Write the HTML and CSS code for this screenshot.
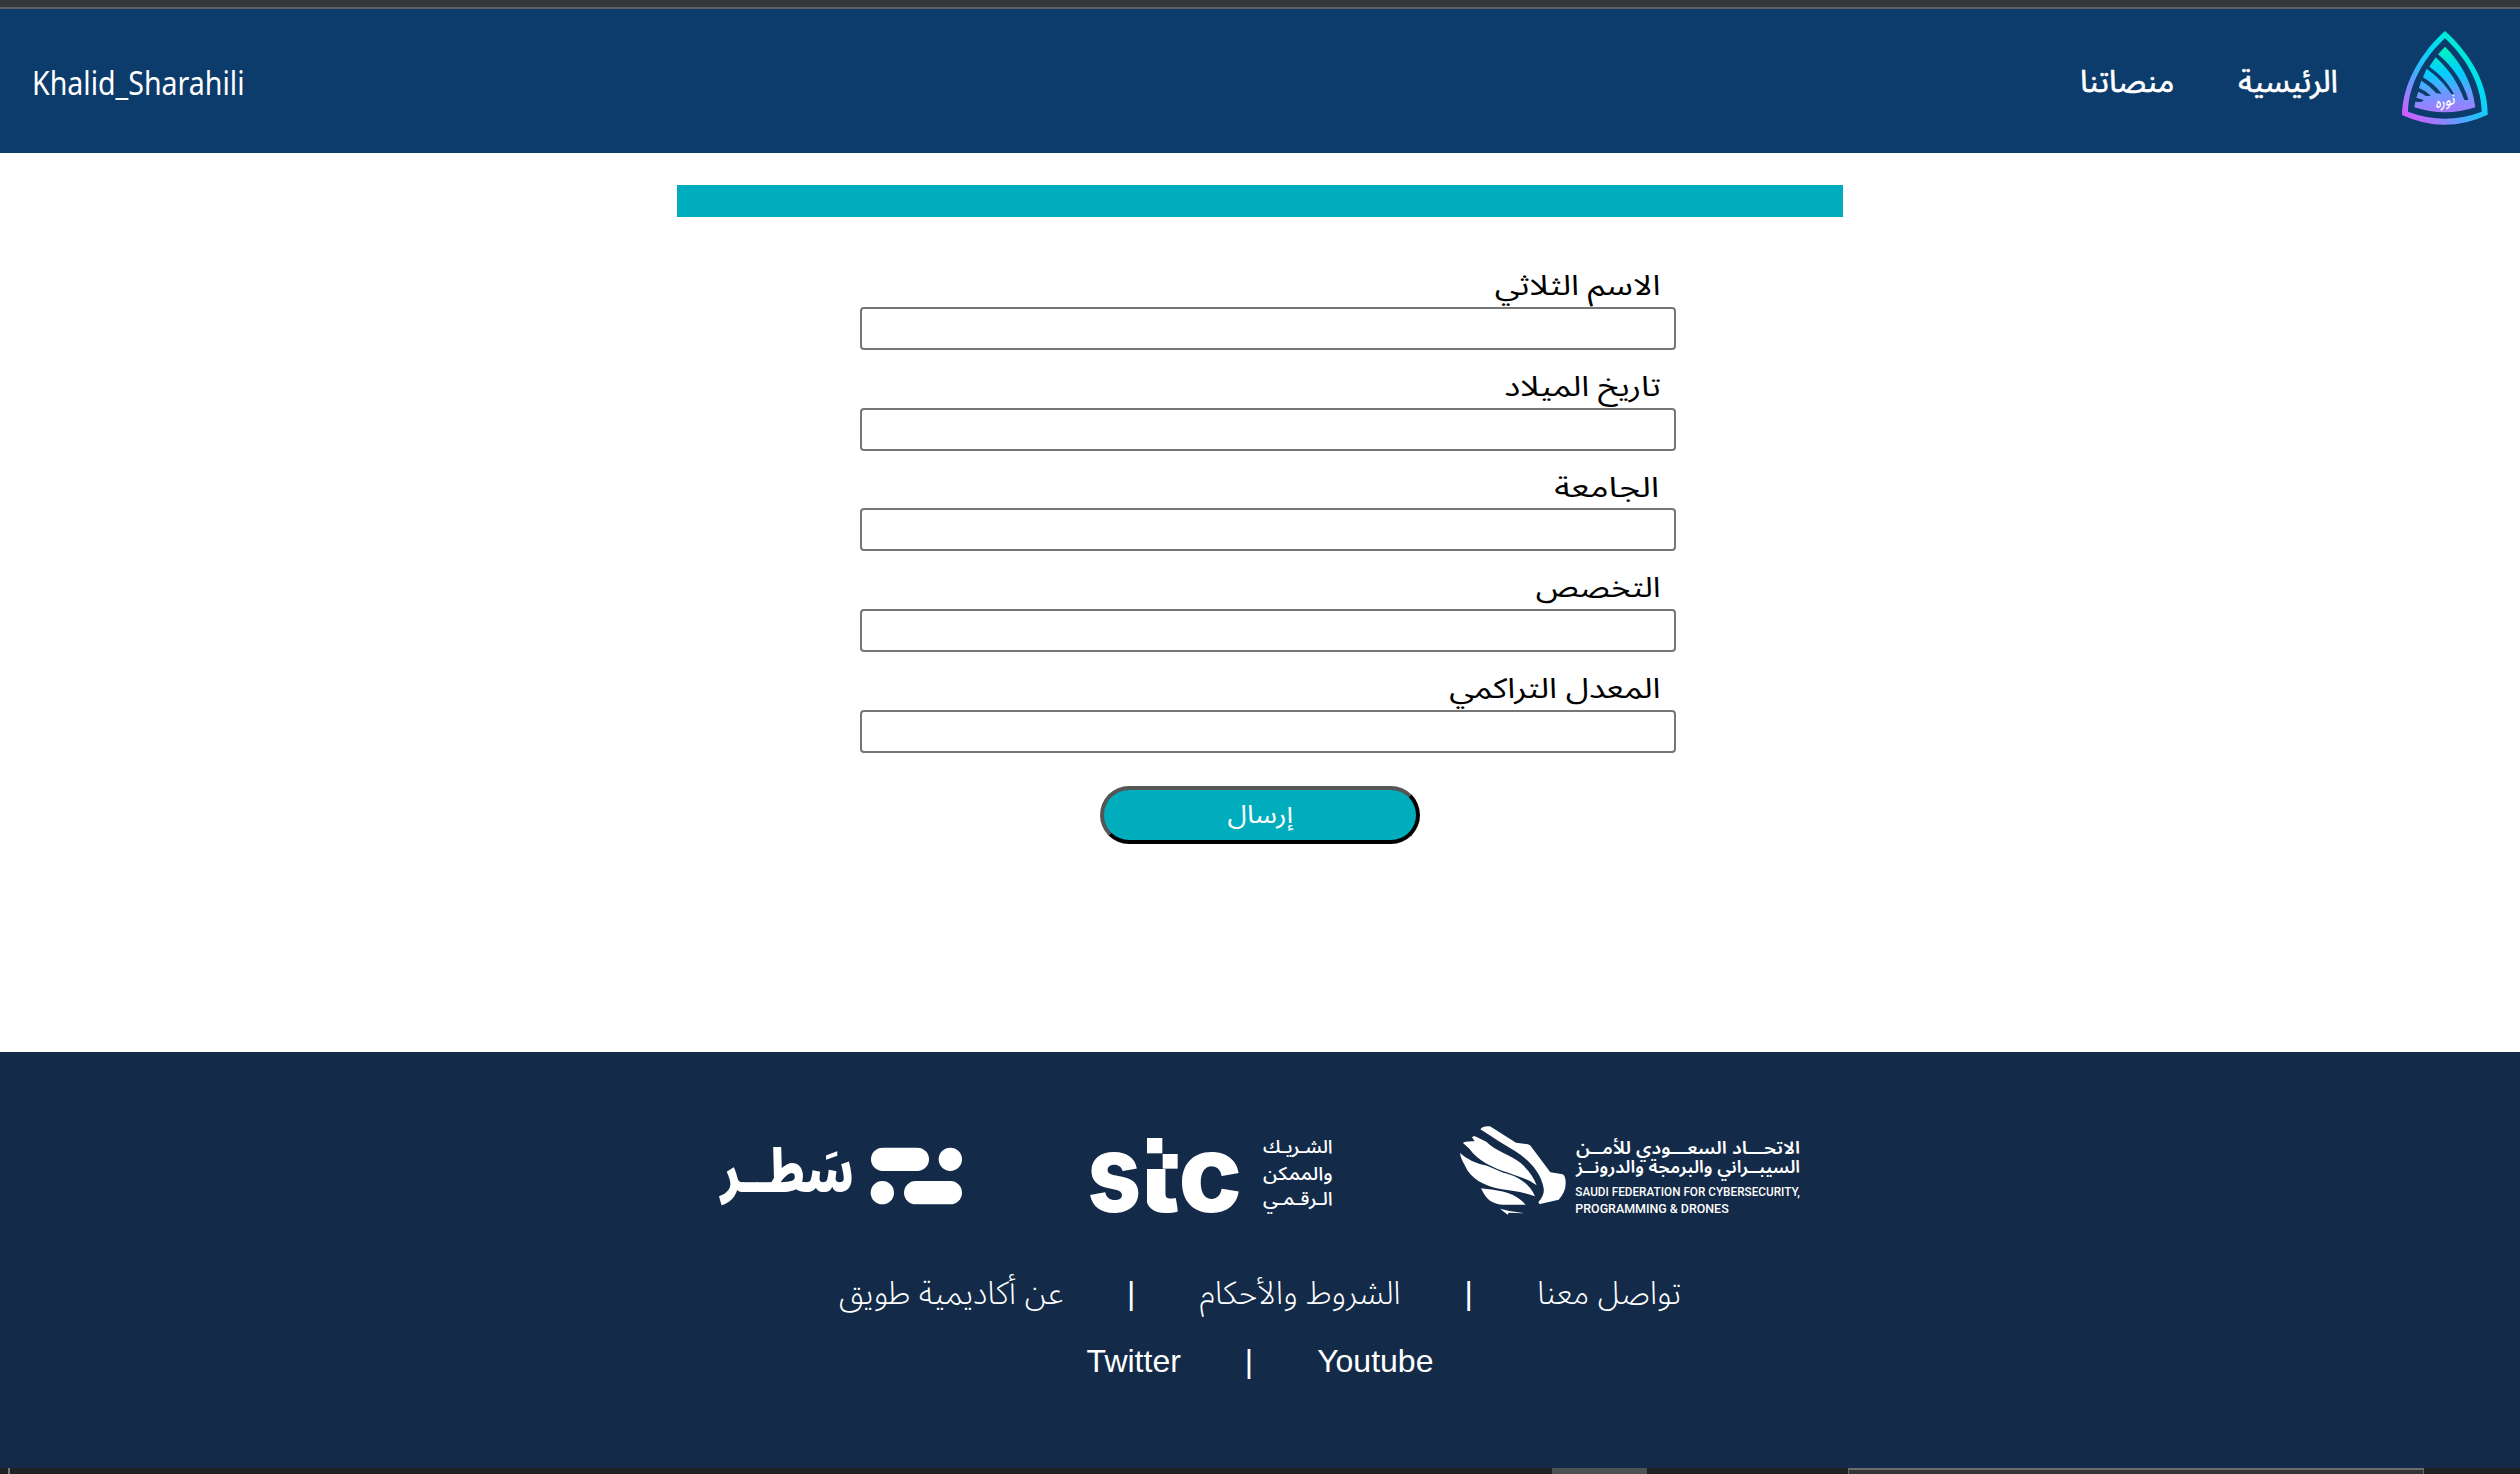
FILE: index.html
```html
<!DOCTYPE html>
<html lang="ar" dir="rtl">
<head>
<meta charset="utf-8">
<title>أكاديمية طويق</title>
<link rel="stylesheet" href="styles.css">
</head>
<body>
<div class="window-edge"></div>
<header class="header">
  <nav class="nav">
    <svg class="brand" viewBox="0 0 258 282">
      <defs>
        <linearGradient id="frame" x1="0" y1="1" x2="0.75" y2="0.1">
          <stop offset="0" stop-color="#e94bff"/><stop offset="0.18" stop-color="#b76fff"/>
          <stop offset="0.5" stop-color="#2fb9ff"/><stop offset="0.75" stop-color="#00dcf5"/><stop offset="1" stop-color="#00f2c4"/>
        </linearGradient>
        <linearGradient id="leaf" x1="0" y1="1" x2="0" y2="0">
          <stop offset="0" stop-color="#a678ff"/><stop offset="0.3" stop-color="#6a9bff"/>
          <stop offset="0.6" stop-color="#00cfff"/><stop offset="1" stop-color="#00f5b8"/>
        </linearGradient>
      </defs>
      <path fill="url(#frame)" fill-rule="evenodd" d="M129 0C196 60 259 152 257 251Q129 311 0 252C2 152 62 60 129 0ZM129 22C70 77 20 155 18 242Q129 284 239 242C238 155 188 77 129 22Z"/>
      <path fill="url(#leaf)" d="M129 47L108 70C158 112 186 160 199 207L187 207C171 164 147 120 101 79L82 107C118 133 141 159 156 190L148 189C129 160 105 136 74 113L63 139C86 152 103 167 119 188L103 187C90 172 77 161 58 149L51 171Q70 178 87 194L72 195Q61 187 49 182L43 200L65 207L58 213L40 212L37 229Q129 259 220 229C212 157 177 94 129 47Z"/>
      <text class="brand-script" x="100" y="226" transform="rotate(-14 128 222) skewX(-12) translate(48 0)" textLength="60" lengthAdjust="spacingAndGlyphs">نوره</text>
    </svg>
    <a class="nav-link">الرئيسية</a>
    <a class="nav-link">منصاتنا</a>
  </nav>
  <span class="user" dir="ltr">Khalid_Sharahili</span>
</header>

<main class="main">
  <div class="banner"></div>
  <form class="form">
    <div class="field"><label class="label">الاسم الثلاثي</label><input class="input"></div>
    <div class="field"><label class="label">تاريخ الميلاد</label><input class="input"></div>
    <div class="field"><label class="label label-wide">الجامعة</label><input class="input"></div>
    <div class="field"><label class="label label-narrow">التخصص</label><input class="input"></div>
    <div class="field"><label class="label">المعدل التراكمي</label><input class="input"></div>
    <button class="submit" type="button"><span class="submit-text">إرسال</span></button>
  </form>
</main>

<footer class="footer">
  <div class="partners">
    <svg class="logo" width="380" height="130" viewBox="0 0 1140 390">
      <g fill="#fff">
        <path d="M121 58Q128 47 150 49L228 98L264 103Q272 105 276 113L331 187L368 193Q377 197 377 220Q377 247 356 269L300 282Q293 281 297 274Q314 255 311 235C304 190 270 151 226 124C191 104 158 82 121 58Z"/>
        <path d="M69 99Q72 93 104 94L96 82Q99 78 105 79L139 95C166 123 214 135 242 159Q277 190 290 226C264 206 240 202 207 189C157 173 111 150 88 116Z"/>
        <path d="M60 129Q91 158 141 167L190 188C230 196 268 220 285 259C250 245 220 244 181 237C135 228 91 207 74 165Q62 145 60 129Z"/>
        <path d="M123 235C165 240 214 244 246 273L257 284Q222 284 187 284C155 282 139 269 123 235Z"/>
        <path d="M180 296L208 303L254 310L206 308L203 314Z"/>
      </g>
      <text class="fed-ar" x="408" y="131" textLength="672" lengthAdjust="spacingAndGlyphs">الاتحـــاد السعـــودي للأمــن</text>
      <text class="fed-ar" x="408" y="190" textLength="672" lengthAdjust="spacingAndGlyphs">السيبــراني والبرمجة والدرونــز</text>
      <text class="fed-en" x="406" y="258" textLength="674" lengthAdjust="spacingAndGlyphs">SAUDI FEDERATION FOR CYBERSECURITY,</text>
      <text class="fed-en" x="406" y="310" textLength="460" lengthAdjust="spacingAndGlyphs">PROGRAMMING &amp; DRONES</text>
    </svg>
    <svg class="logo" width="290" height="110" viewBox="0 0 870 330">
      <defs><clipPath id="stem"><rect x="231" y="147" width="92" height="140"/></clipPath></defs>
      <text class="stc" x="52" y="275" textLength="162" lengthAdjust="spacingAndGlyphs">s</text>
      <g clip-path="url(#stem)"><text class="stc" x="200" y="275" textLength="130" lengthAdjust="spacingAndGlyphs">t</text></g>
      <text class="stc" x="325" y="275" textLength="192" lengthAdjust="spacingAndGlyphs">c</text>
      <rect x="231" y="54" width="46" height="46" fill="#fff"/>
      <rect x="278" y="102" width="45" height="44" fill="#fff"/>
      <text class="stc-ar" x="579" y="100" textLength="209" lengthAdjust="spacingAndGlyphs">الشـريـك</text>
      <text class="stc-ar" x="579" y="179" textLength="209" lengthAdjust="spacingAndGlyphs">والممكن</text>
      <text class="stc-ar" x="579" y="256" textLength="209" lengthAdjust="spacingAndGlyphs">الـرقـمـي</text>
    </svg>
    <svg class="logo" width="290" height="90" viewBox="0 0 870 270">
      <text class="satr" x="62" y="186" textLength="400" lengthAdjust="spacingAndGlyphs">سَطــر</text>
      <g fill="#fff">
        <rect x="513" y="53" width="174" height="70" rx="35"/><circle cx="751" cy="88" r="35"/>
        <circle cx="547" cy="188" r="35"/><rect x="612" y="153" width="174" height="70" rx="35"/>
      </g>
    </svg>
  </div>
  <div class="links">
    <a class="link-ar">تواصل معنا</a><span>|</span><a class="link-ar">الشروط والأحكام</a><span>|</span><a class="link-ar">عن أكاديمية طويق</a>
  </div>
  <div class="links">
    <a>Youtube</a><span>|</span><a>Twitter</a>
  </div>
</footer>
<div class="taskbar"><i class="tick"></i><i class="tab"></i><i class="search"></i></div>
</body>
</html>
```
FILE: styles.css
```css
* { box-sizing: border-box; }
body {
  margin: 0;
  height: 1474px;
  overflow: hidden;
  display: flex;
  flex-direction: column;
  background: #fff;
  font-family: "Noto Sans Arabic", "Noto Sans", sans-serif;
  font-size: 32px;
}
.window-edge { height: 9px; background: #35363a; border-bottom: 2px solid #5f6063; flex: none; }

.header {
  height: 144px;
  flex: none;
  display: flex;
  align-items: center;
  justify-content: space-between;
  padding: 0 32px;
  background: #0c3c6b;
  color: #fff;
}
.nav { display: flex; align-items: center; gap: 64px; }
.nav-link { font-size: 31px; font-weight: 400; -webkit-text-stroke: 0.6px #fff; line-height: 56px; padding-top: 2px; }
.brand { width: 86px; height: 94px; margin-top: -6px; direction: ltr; }
.brand-script { fill: #fff; font-size: 44px; font-weight: 500; }
.user {
  font-family: "Noto Sans", sans-serif;
  font-size: 33px;
  line-height: 48px;
  padding-top: 3px;
  transform: scaleX(0.865);
  transform-origin: left;
}

.main { height: 899px; flex: none; padding-top: 32px; display: flex; flex-direction: column; align-items: center; }
.banner { width: 1166px; height: 32px; background: #00adbc; }
.form { width: 816px; margin: 32px 0 0 16px; display: flex; flex-direction: column; }
.field { height: 100.8px; display: flex; flex-direction: column; align-items: flex-start; }
.label {
  height: 57.8px;
  line-height: 75px;
  padding-right: 13px;
  font-size: 28px;
  font-weight: 400;
  color: #000;
  transform: scaleX(1.2);
  transform-origin: right;
}
.label-wide { transform: scaleX(1.27); }
.label-narrow { transform: scaleX(1.17); }
.input { width: 816px; height: 43px; margin: 0; border: 2px solid #767676; border-radius: 4px; background: #fff; }
.submit {
  width: 320px;
  height: 58px;
  margin: 33px 256px 0 0;
  padding: 0;
  border: 4px solid #000;
  border-top-color: #555;
  border-left-color: #555;
  border-radius: 30px;
  background: #00adbc;
  color: #fff;
  font: 400 25px/48px "Noto Sans Arabic", sans-serif;
}
.submit-text { display: inline-block; transform: scaleX(1.12); }

.footer { height: 416px; flex: none; padding-top: 58px; background: #132a48; color: #fff; }
.partners { display: flex; justify-content: center; align-items: center; gap: 80px; height: 130px; margin-bottom: 19px; }
.logo { direction: ltr; flex: none; }
.logo text { fill: #fff; }
.fed-ar { font-size: 52px; font-weight: 600; }
.fed-en { font: 500 40px Roboto, sans-serif; }
.stc { font: 800 325px Inter, sans-serif; }
.stc-ar { font-size: 56px; font-weight: 500; }
.satr { font-size: 176px; font-weight: 900; }
.links { display: flex; justify-content: center; align-items: baseline; gap: 64px; height: 68px; font: 32px/68px "Liberation Sans", sans-serif; }
.link-ar { font-family: "Noto Sans Arabic", sans-serif; font-weight: 300; }

.taskbar { height: 6px; flex: none; display: flex; direction: ltr; background: #202124; }
.tick { width: 2px; margin-left: 8px; background: #777; }
.tab { width: 95px; margin-left: 1542px; background: #4d5154; }
.search { width: 576px; margin-left: 201px; background: #343437; border: solid #6b6b6d; border-width: 2px 1px 0; }
```
